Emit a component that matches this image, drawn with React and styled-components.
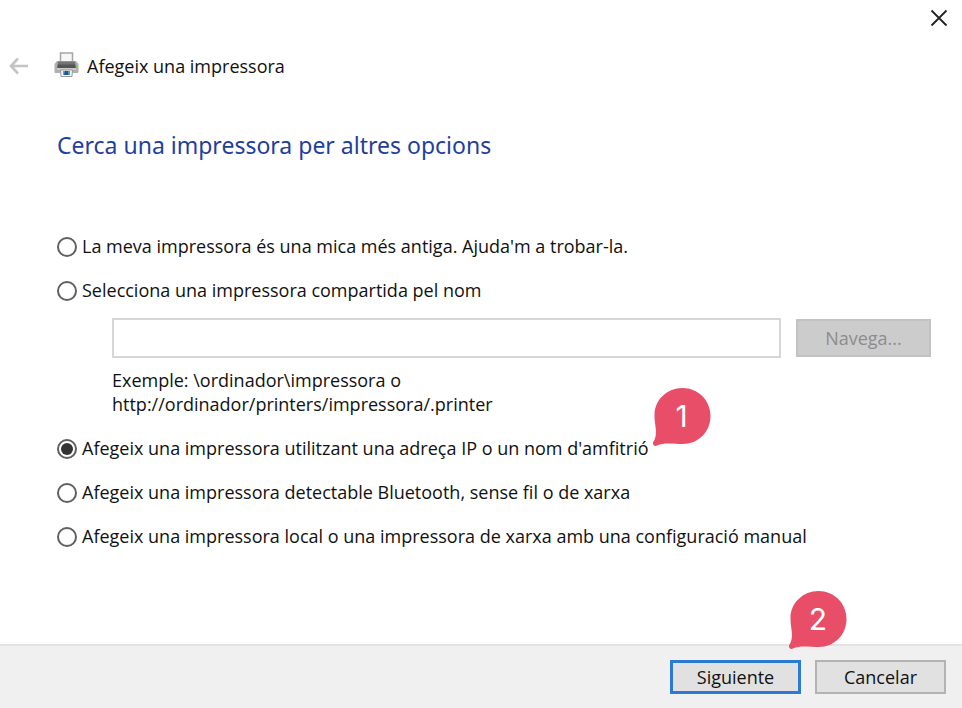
import React, { useState } from "react";
import styled, { createGlobalStyle } from "styled-components";

const GlobalStyle = createGlobalStyle`
  *, *::before, *::after { box-sizing: border-box; }
  body {
    margin: 0;
    background: #fff;
    color: #111;
    font-family: "Open Sans", "Noto Sans", sans-serif;
    font-size: 18px;
    line-height: 24px;
  }
  button, input { font: inherit; color: inherit; }
`;

const Dialog = styled.form`
  display: flex;
  flex-direction: column;
  min-height: 100vh;
`;

const TitleBar = styled.div`
  display: flex;
  justify-content: flex-end;
  height: 36px;
`;

const IconButton = styled.button`
  display: flex;
  align-items: center;
  justify-content: center;
  width: ${(p) => p.$width}px;
  height: 36px;
  padding: 0;
  border: 0;
  background: none;
`;

const Header = styled.header`
  display: flex;
  align-items: center;
  height: 60px;
`;

const PrinterIcon = styled.svg`
  margin: 0 8px 2px 16px;
`;

const Main = styled.main`
  flex: 1;
  padding: 32px 31px 40px 57px;
`;

const Heading = styled.h1`
  margin: 0 0 72px;
  color: #1f3f9e;
  font-family: "Noto Sans", "Open Sans", sans-serif;
  font-size: 23px;
  font-weight: 400;
  line-height: 34px;
`;

const Options = styled.div`
  display: flex;
  flex-direction: column;
  align-items: stretch;
  gap: 20px;
`;

const OptionRow = styled.div`
  display: flex;
`;

const OptionLabel = styled.label`
  display: flex;
  align-items: center;
  gap: 5px;
  position: relative;
`;

const Radio = styled.input`
  appearance: none;
  display: grid;
  place-content: center;
  flex: none;
  width: 20px;
  height: 20px;
  margin: 1px 0 0;
  border: 2px solid #606060;
  border-radius: 50%;
  background: #fff;

  &:checked::before {
    content: "";
    width: 12px;
    height: 12px;
    border-radius: 50%;
    background: #333;
  }
`;

const SharedPrinter = styled.div`
  display: flex;
  align-items: center;
  gap: 15px;
  margin: 16px 0 10px 55px;
`;

const NameInput = styled.input`
  flex: 1;
  min-width: 0;
  height: 40px;
  padding: 0 8px;
  border: 2px solid #d6d6d6;
  background: #fff;
`;

const Hint = styled.p`
  margin: 0 0 0 55px;
`;

const Button = styled.button`
  width: ${(p) => p.$width || 131}px;
  height: ${(p) => p.$height || 34}px;
  padding: 0;
  border: 2px solid #b3b3b3;
  background: #e1e1e1;

  &:disabled {
    border-color: #c2c2c2;
    background: #ccc;
    color: #8c8c8c;
  }
`;

const PrimaryButton = styled(Button)`
  border: 3px solid #2b7ad3;
`;

const Footer = styled.footer`
  display: flex;
  justify-content: flex-end;
  gap: 14px;
  padding: 14px 16px;
  border-top: 2px solid #e3e3e3;
  background: #f0f0f0;
`;

const Anchor = styled.div`
  position: relative;
  display: flex;
`;

const Marker = styled.span`
  position: absolute;
  left: ${(p) => p.$left};
  bottom: ${(p) => p.$bottom};
  width: 60px;
  height: 60px;
  color: #fff;
  font-family: Inter, sans-serif;
  font-size: 30px;
  line-height: 58px;
  text-align: center;

  svg { position: absolute; inset: 0; }
  b { position: relative; font-weight: 400; }
`;

function StepMarker({ number, left, bottom }) {
  return (
    <Marker $left={left} $bottom={bottom}>
      <svg width="60" height="60" viewBox="0 0 60 60" aria-hidden="true">
        <path
          fill="#e84e67"
          d="M30.500 1C46 1 58.500 13 58.500 29C58.500 45 46 57 31 57C22 57 12 55 5 58.500C2 60 0 57 1.500 54.500C5 49 4 43 3 36C2.600 32 2.500 31 2.500 28C2.500 13 15 1 30.500 1Z"
        />
      </svg>
      <b>{number}</b>
    </Marker>
  );
}

function Option({ value, selected, onSelect, children, marker }) {
  return (
    <OptionRow>
      <OptionLabel>
        <Radio
          type="radio"
          name="method"
          value={value}
          checked={selected === value}
          onChange={() => onSelect(value)}
        />
        <span>{children}</span>
        {marker}
      </OptionLabel>
    </OptionRow>
  );
}

export default function App() {
  const [selected, setSelected] = useState("ip");
  const choice = { selected, onSelect: setSelected };

  return (
    <Dialog onSubmit={(e) => e.preventDefault()}>
      <GlobalStyle />
      <TitleBar>
        <IconButton type="button" aria-label="Tanca" $width={46}>
          <svg width="18" height="18" viewBox="0 0 18 18" stroke="#222" strokeWidth="1.800">
            <path d="M1.500 1.500L16.500 16.500M16.500 1.500L1.500 16.500" />
          </svg>
        </IconButton>
      </TitleBar>
      <Header>
        <IconButton type="button" aria-label="Enrere" $width={38}>
          <svg width="20" height="18" viewBox="0 0 20 18" fill="none" stroke="#c4c4c4" strokeWidth="2.600">
            <path d="M9 1.500L2 9L9 16.500M2 9H19" />
          </svg>
        </IconButton>
        <PrinterIcon width="25" height="26" viewBox="0 0 25 26" aria-hidden="true">
          <path d="M6.500 10V1H18.500V10" fill="#f7f7f7" stroke="#a5a5a5" strokeWidth="1.500" />
          <path d="M3 9H22L24.500 12V20Q24.500 21 23.500 21H1.500Q.5 21 .5 20V12Z" fill="#b0b0b0" />
          <path d="M4 9.500H21L22 16H3Z" fill="#747474" />
          <path d="M4 12.500H21L21.500 16H3.500Z" fill="#555" />
          <path d="M3 17H22" stroke="#e2e2e2" />
          <path d="M22 14h1.500" stroke="#7bd34e" strokeWidth="2" />
          <path d="M6.500 18H18.500L18 24.500H7Z" fill="#f4f4f4" stroke="#999" />
          <path d="M9 19H12L11 23H9Z" fill="#5ba6c2" />
          <path d="M11 19H14V23H10Z" fill="#1e529d" />
          <path d="M14 19H16V23H14Z" fill="#4fa0a4" />
        </PrinterIcon>
        <span>Afegeix una impressora</span>
      </Header>
      <Main>
        <Heading>Cerca una impressora per altres opcions</Heading>
        <Options role="radiogroup" aria-label="Cerca una impressora per altres opcions">
          <Option value="old" {...choice}>
            La meva impressora és una mica més antiga. Ajuda'm a trobar-la.
          </Option>
          <div>
            <Option value="shared" {...choice}>
              Selecciona una impressora compartida pel nom
            </Option>
            <SharedPrinter>
              <NameInput type="text" aria-label="Nom de la impressora compartida" disabled={selected !== "shared"} />
              <Button type="button" $width={135} $height={38} disabled={selected !== "shared"}>
                Navega...
              </Button>
            </SharedPrinter>
            <Hint>
              Exemple: \ordinador\impressora o
              <br />
              http://ordinador/printers/impressora/.printer
            </Hint>
          </div>
          <Option
            value="ip"
            {...choice}
            marker={<StepMarker number="1" left="calc(100% + 3px)" bottom="13px" />}
          >
            Afegeix una impressora utilitzant una adreça IP o un nom d'amfitrió
          </Option>
          <Option value="bluetooth" {...choice}>
            Afegeix una impressora detectable Bluetooth, sense fil o de xarxa
          </Option>
          <Option value="local" {...choice}>
            Afegeix una impressora local o una impressora de xarxa amb una configuració manual
          </Option>
        </Options>
      </Main>
      <Footer>
        <Anchor>
          <PrimaryButton type="submit">Siguiente</PrimaryButton>
          <StepMarker number="2" left="calc(100% - 13px)" bottom="calc(100% + 10px)" />
        </Anchor>
        <Button type="button">Cancelar</Button>
      </Footer>
    </Dialog>
  );
}
